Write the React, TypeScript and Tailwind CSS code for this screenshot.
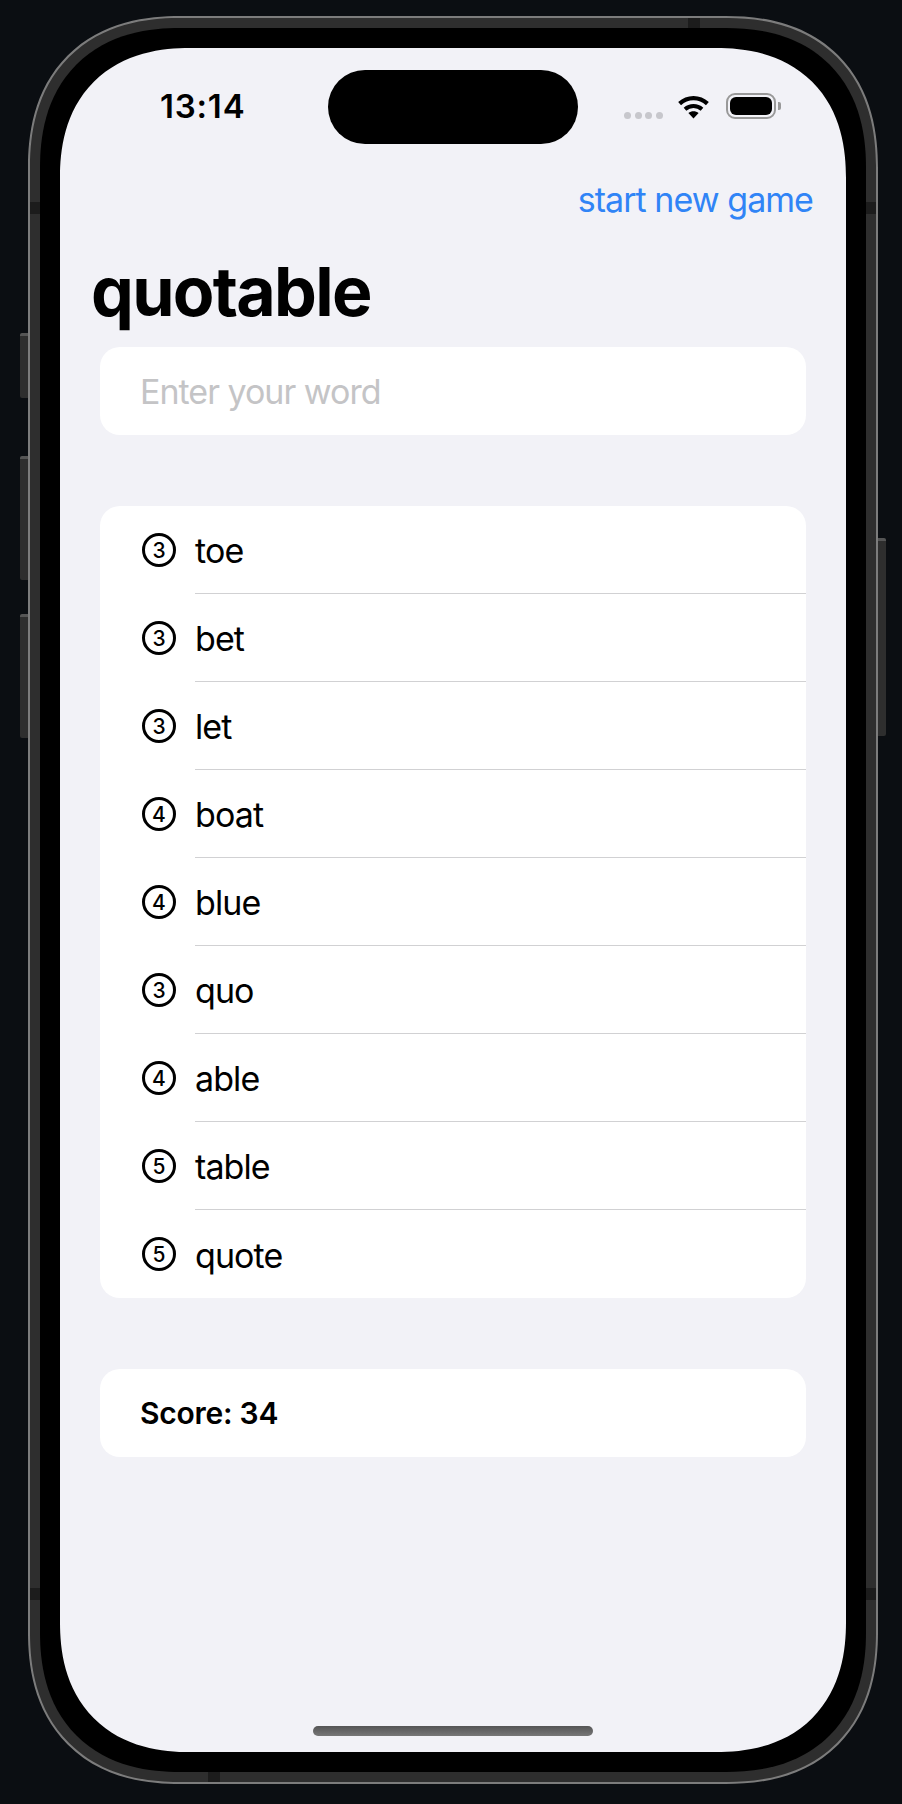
const WORDS = [
  { n: 3, word: 'toe' },
  { n: 3, word: 'bet' },
  { n: 3, word: 'let' },
  { n: 4, word: 'boat' },
  { n: 4, word: 'blue' },
  { n: 3, word: 'quo' },
  { n: 4, word: 'able' },
  { n: 5, word: 'table' },
  { n: 5, word: 'quote' },
];

function WifiIcon() {
  return (
    <svg width="33" height="25" viewBox="0 0 33 25" className="mt-[1px]">
      <path d="M2.6 9.6C10.6 2.2 22.4 2.2 30.4 9.6" fill="none" stroke="#000" strokeWidth="4.2" />
      <path d="M8 15.2C12.9 10.9 20.1 10.9 25 15.2" fill="none" stroke="#000" strokeWidth="4" />
      <path d="M11.4 19.1C14.4 16.5 18.6 16.5 21.6 19.1L16.5 24.6Z" fill="#000" />
    </svg>
  );
}

function Battery() {
  return (
    <div className="flex items-center gap-[2px]">
      <div className="flex h-[26px] w-[50px] rounded-[9px] border-2 border-[#999999] p-[2px]">
        <div className="flex-1 rounded-[6px] bg-black" />
      </div>
      <div className="h-[8px] w-[3px] rounded-r-[2px] bg-[#999999]" />
    </div>
  );
}

function StatusBar() {
  return (
    <div className="mt-[22px] grid h-[74px] grid-cols-[268px_250px_1fr]">
      <div className="pl-[100px] pt-[16px] text-[33px] font-semibold leading-[40px] tracking-[0.8px] text-black">13:14</div>
      <div className="rounded-[37px] bg-black" />
      <div className="flex items-start pl-[46px] pt-[23px]">
        <div className="flex gap-[3.7px] pt-[19px]">
          <span className="size-[7px] rounded-full bg-[#c7c7cc]" />
          <span className="size-[7px] rounded-full bg-[#c7c7cc]" />
          <span className="size-[7px] rounded-full bg-[#c7c7cc]" />
          <span className="size-[7px] rounded-full bg-[#c7c7cc]" />
        </div>
        <div className="ml-[14px]">
          <WifiIcon />
        </div>
        <div className="ml-[16px]">
          <Battery />
        </div>
      </div>
    </div>
  );
}

function WordRow({ n, word, last }: { n: number; word: string; last: boolean }) {
  return (
    <div className="flex h-[88px] items-stretch pl-[42px]">
      <div className="flex w-[53px] items-center">
        <div className="flex size-[34px] items-center justify-center rounded-full border-[3px] border-black text-[21px] font-medium leading-none text-black">
          {n}
        </div>
      </div>
      <div
        className={`flex flex-1 items-center pt-[2px] text-[34px] tracking-[-0.9px] text-black ${last ? '' : 'border-b border-[#d1d1d3]'}`}
      >
        {word}
      </div>
    </div>
  );
}

export default function App() {
  return (
    <div className="relative h-[1804px] w-[902px] overflow-hidden bg-[#0b0e12] pl-[28px] pt-[16px] font-['Inter',sans-serif]">
      {/* side buttons */}
      <div className="absolute left-[20px] top-[333px] h-[65px] w-[8px] rounded-l-[2px] border-t-[3px] border-[#555555] bg-[#2e2e2e]" />
      <div className="absolute left-[20px] top-[456px] h-[124px] w-[8px] rounded-l-[2px] border-t-[3px] border-[#555555] bg-[#2e2e2e]" />
      <div className="absolute left-[20px] top-[614px] h-[124px] w-[8px] rounded-l-[2px] border-t-[3px] border-[#555555] bg-[#2e2e2e]" />
      <div className="absolute left-[878px] top-[538px] h-[198px] w-[8px] rounded-r-[2px] border-t-[3px] border-[#555555] bg-[#2e2e2e]" />

      <div className="relative h-[1768px] w-[850px] rounded-[152px] border-2 border-[#7c7c7c] bg-[#2e2e2e] p-[10px] [corner-shape:superellipse(1.2)]">
        {/* antenna bands */}
        <div className="absolute left-0 top-[184px] h-[12px] w-[10px] bg-[#1c1c1c]" />
        <div className="absolute right-0 top-[184px] h-[12px] w-[10px] bg-[#1c1c1c]" />
        <div className="absolute left-0 top-[1570px] h-[12px] w-[10px] bg-[#1c1c1c]" />
        <div className="absolute right-0 top-[1570px] h-[12px] w-[10px] bg-[#1c1c1c]" />
        <div className="absolute left-[658px] top-0 h-[10px] w-[12px] bg-[#1c1c1c]" />
        <div className="absolute bottom-0 left-[178px] h-[10px] w-[12px] bg-[#1c1c1c]" />

        <div className="h-full rounded-[140px] bg-black p-[20px] [corner-shape:superellipse(1.2)]">
          <div className="relative flex h-[1704px] w-[786px] flex-col overflow-hidden rounded-[130px] bg-[#f2f2f7] [corner-shape:superellipse(1.2)]">
            <StatusBar />

            <div className="mt-[35px] pr-[33px] text-right text-[34px] leading-[41px] tracking-[-0.95px] text-[#3084f6]">
              start new game
            </div>

            <h1 className="mt-[30px] pl-[31px] text-[68px] font-bold leading-[82px] tracking-[-1.7px] text-black">quotable</h1>

            <div className="mx-[40px] mt-[15px] flex h-[88px] w-[706px] items-center rounded-[20px] bg-white pl-[40px] text-[34px] tracking-[-1px] text-[#c4c4c6]">
              Enter your word
            </div>

            <div className="mx-[40px] mt-[71px] w-[706px] overflow-hidden rounded-[20px] bg-white">
              {WORDS.map((w, i) => (
                <WordRow key={w.word} n={w.n} word={w.word} last={i === WORDS.length - 1} />
              ))}
            </div>

            <div className="mx-[40px] mt-[71px] flex h-[88px] w-[706px] items-center rounded-[20px] bg-white pl-[40px] text-[30px] font-semibold tracking-[-0.25px] text-black">
              Score: 34
            </div>

            <div className="absolute bottom-[16px] left-[253px] h-[10px] w-[280px] rounded-full bg-gradient-to-b from-[#555555] to-[#777777]" />
          </div>
        </div>
      </div>
    </div>
  );
}
